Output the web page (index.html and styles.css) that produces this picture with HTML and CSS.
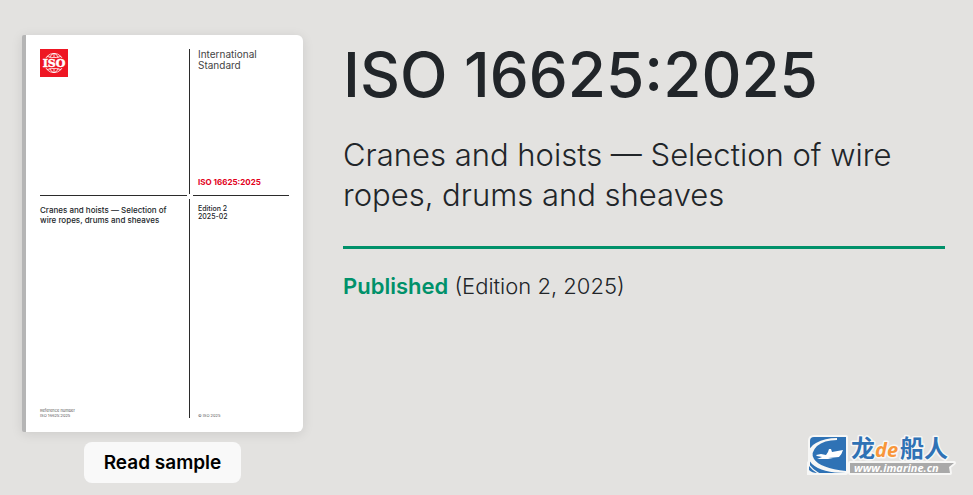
FILE: index.html
```html
<!DOCTYPE html>
<html lang="en">
<head>
    <meta charset="UTF-8">
    <meta name="viewport" content="width=device-width, initial-scale=1.0">
    <title>ISO 16625:2025</title>
    <link rel="stylesheet" href="styles.css">
</head>
<body>
    <main class="product">
        <div class="preview">
            <div class="cover">
                <div class="cover-logo">
                    <svg class="iso-logo" viewBox="0 0 28 28" role="img" aria-label="ISO">
                        <rect width="28" height="28" fill="#ee1623"/>
                        <g fill="none" stroke="#fff" stroke-width="0.8">
                            <circle cx="14" cy="14" r="9.6"/>
                            <ellipse cx="14" cy="14" rx="5" ry="9.6"/>
                            <path d="M14 4.4v19.2M7 7.5q7 2.6 14 0M7 20.5q7-2.6 14 0"/>
                        </g>
                        <rect x="2" y="9" width="24" height="10" fill="#ee1623"/>
                        <text x="14" y="18" text-anchor="middle" class="iso-letters">ISO</text>
                    </svg>
                </div>
                <div class="line-v"></div>
                <div class="cover-type">
                    <p class="type-name">International<br>Standard</p>
                    <p class="cover-ref">ISO 16625:2025</p>
                </div>
                <div class="line-h"></div>
                <div></div>
                <div class="line-h"></div>
                <div class="cover-info">
                    <p class="cover-title">Cranes and hoists — Selection of wire ropes, drums and sheaves</p>
                    <p class="cover-small">Reference number<br>ISO 16625:2025</p>
                </div>
                <div class="line-v"></div>
                <div class="cover-edition">
                    <p class="edition">Edition 2<br>2025-02</p>
                    <p class="cover-small">© ISO 2025</p>
                </div>
            </div>
            <button class="btn-sample" type="button">Read sample</button>
        </div>
        <div class="details">
            <h1>ISO 16625:2025</h1>
            <h2>Cranes and hoists — Selection of wire ropes, drums and sheaves</h2>
            <p class="status"><strong>Published</strong> (Edition 2, 2025)</p>
        </div>
    </main>

    <svg class="watermark" viewBox="0 0 146 44" role="img" aria-label="龙de船人 www.imarine.cn">
        <g stroke="#f7f7f6" stroke-width="4" stroke-linejoin="round" paint-order="stroke">
            <path fill="#2f72b5" d="M7 3h32v36H7q-4 0-4-4V7q0-4 4-4z"/>
            <path fill="#a9a9a9" d="M43 29h104l-5 4 1 6H43z"/>
        </g>
        <path fill="#f7f7f6" d="M30 6Q17 6 10 12q-7 7-3 13 6 9 32 12v2Q15 39 5 30q-3-3-4-8 0-9 8-13Q18 4 30 4z"/>
        <path fill="#f7f7f6" d="M0 27q5 9 16 14H0z"/>
        <path fill="#2f72b5" d="M2 32q4 5 8 7-5 0-8-3z"/>
        <path fill="#fff" d="M9 21l5-1 5 1 2-3 1-3 2 0 1 3 11-2q-1 4-4 7l-11 1 5 1-10 0-6 0 5-2-5-1z"/>
        <text x="44" y="23" class="wm-name">龙</text>
        <text x="68" y="23" class="wm-name wm-de">de</text>
        <text x="93" y="23" class="wm-name">船人</text>
        <text x="47" y="38" class="wm-url">www.imarine.cn</text>
    </svg>
</body>
</html>
```
FILE: styles.css
```css
* {
    box-sizing: border-box;
}
body {
    margin: 0;
    font-family: Inter, sans-serif;
    color: #212529;
    background-color: #e3e2e0;
}
h1, h2, p {
    margin: 0;
}
.product {
    display: flex;
    gap: 40px;
    padding: 35px 28px 12px 22px;
}
.preview {
    display: flex;
    flex-direction: column;
    align-items: center;
    gap: 10px;
}
.cover {
    display: grid;
    grid-template-columns: 147px 6px 96px;
    grid-template-rows: 145px 5px 219px;
    padding: 14px;
    background-color: #fff;
    border-left: 4px solid #b5b5b5;
    border-radius: 2px 6px 6px 2px;
    box-shadow: 0 2px 12px rgba(0, 0, 0, 0.1);
}
.iso-logo {
    display: block;
    width: 28px;
    height: 28px;
}
.iso-letters {
    font-family: "DejaVu Serif", serif;
    font-size: 11px;
    font-weight: bold;
    fill: #fff;
    stroke: #fff;
    stroke-width: 0.5px;
}
.line-v {
    width: 1px;
    margin-left: 2px;
    background-color: #2b2b2b;
}
.line-h {
    height: 1px;
    margin-top: 1px;
    background-color: #2b2b2b;
}
.cover-type, .cover-info, .cover-edition {
    display: flex;
    flex-direction: column;
    justify-content: space-between;
}
.cover-type {
    padding: 0 0 7px 5px;
}
.cover-info {
    padding: 6px 16px 0 0;
}
.cover-edition {
    padding: 6px 0 0 5px;
}
.type-name {
    font-size: 10px;
    line-height: 11px;
    color: #444;
}
.cover-ref {
    font-size: 8px;
    line-height: 10px;
    font-weight: 700;
    color: #e2001a;
}
.cover-title {
    font-size: 8px;
    line-height: 10px;
    font-weight: 500;
}
.edition {
    font-size: 7px;
    line-height: 8px;
    font-weight: 500;
}
.cover-small {
    font-size: 4px;
    line-height: 5px;
    color: #555;
}
.btn-sample {
    padding: 8px 20px;
    border: none;
    border-radius: 8px;
    font-family: inherit;
    font-size: 19px;
    line-height: 25px;
    font-weight: 600;
    color: #000;
    background-color: #f9f9f9;
    cursor: pointer;
}
.details {
    flex: 1;
}
h1 {
    font-size: 62px;
    line-height: 80px;
    font-weight: 500;
}
h2 {
    padding: 20px 0 31px;
    border-bottom: 3px solid #00916a;
    font-size: 31px;
    line-height: 40px;
    font-weight: 300;
}
.status {
    padding-top: 20px;
    font-size: 22px;
    line-height: 34px;
    font-weight: 300;
}
.status strong {
    font-weight: 600;
    color: #00916a;
}
.watermark {
    position: absolute;
    right: 20px;
    bottom: 17px;
    width: 146px;
    height: 44px;
    overflow: visible;
}
.wm-name {
    font-family: "Noto Sans CJK SC", sans-serif;
    font-size: 24px;
    font-weight: 700;
    fill: #2f72b5;
    stroke: #f7f7f6;
    stroke-width: 3px;
    stroke-linejoin: round;
    paint-order: stroke;
}
.wm-de {
    font-family: "Open Sans", sans-serif;
    font-size: 20px;
    font-style: italic;
    fill: #f8963a;
}
.wm-url {
    font-family: "Open Sans", sans-serif;
    font-size: 11px;
    font-weight: 700;
    font-style: italic;
    fill: #fff;
}
```
